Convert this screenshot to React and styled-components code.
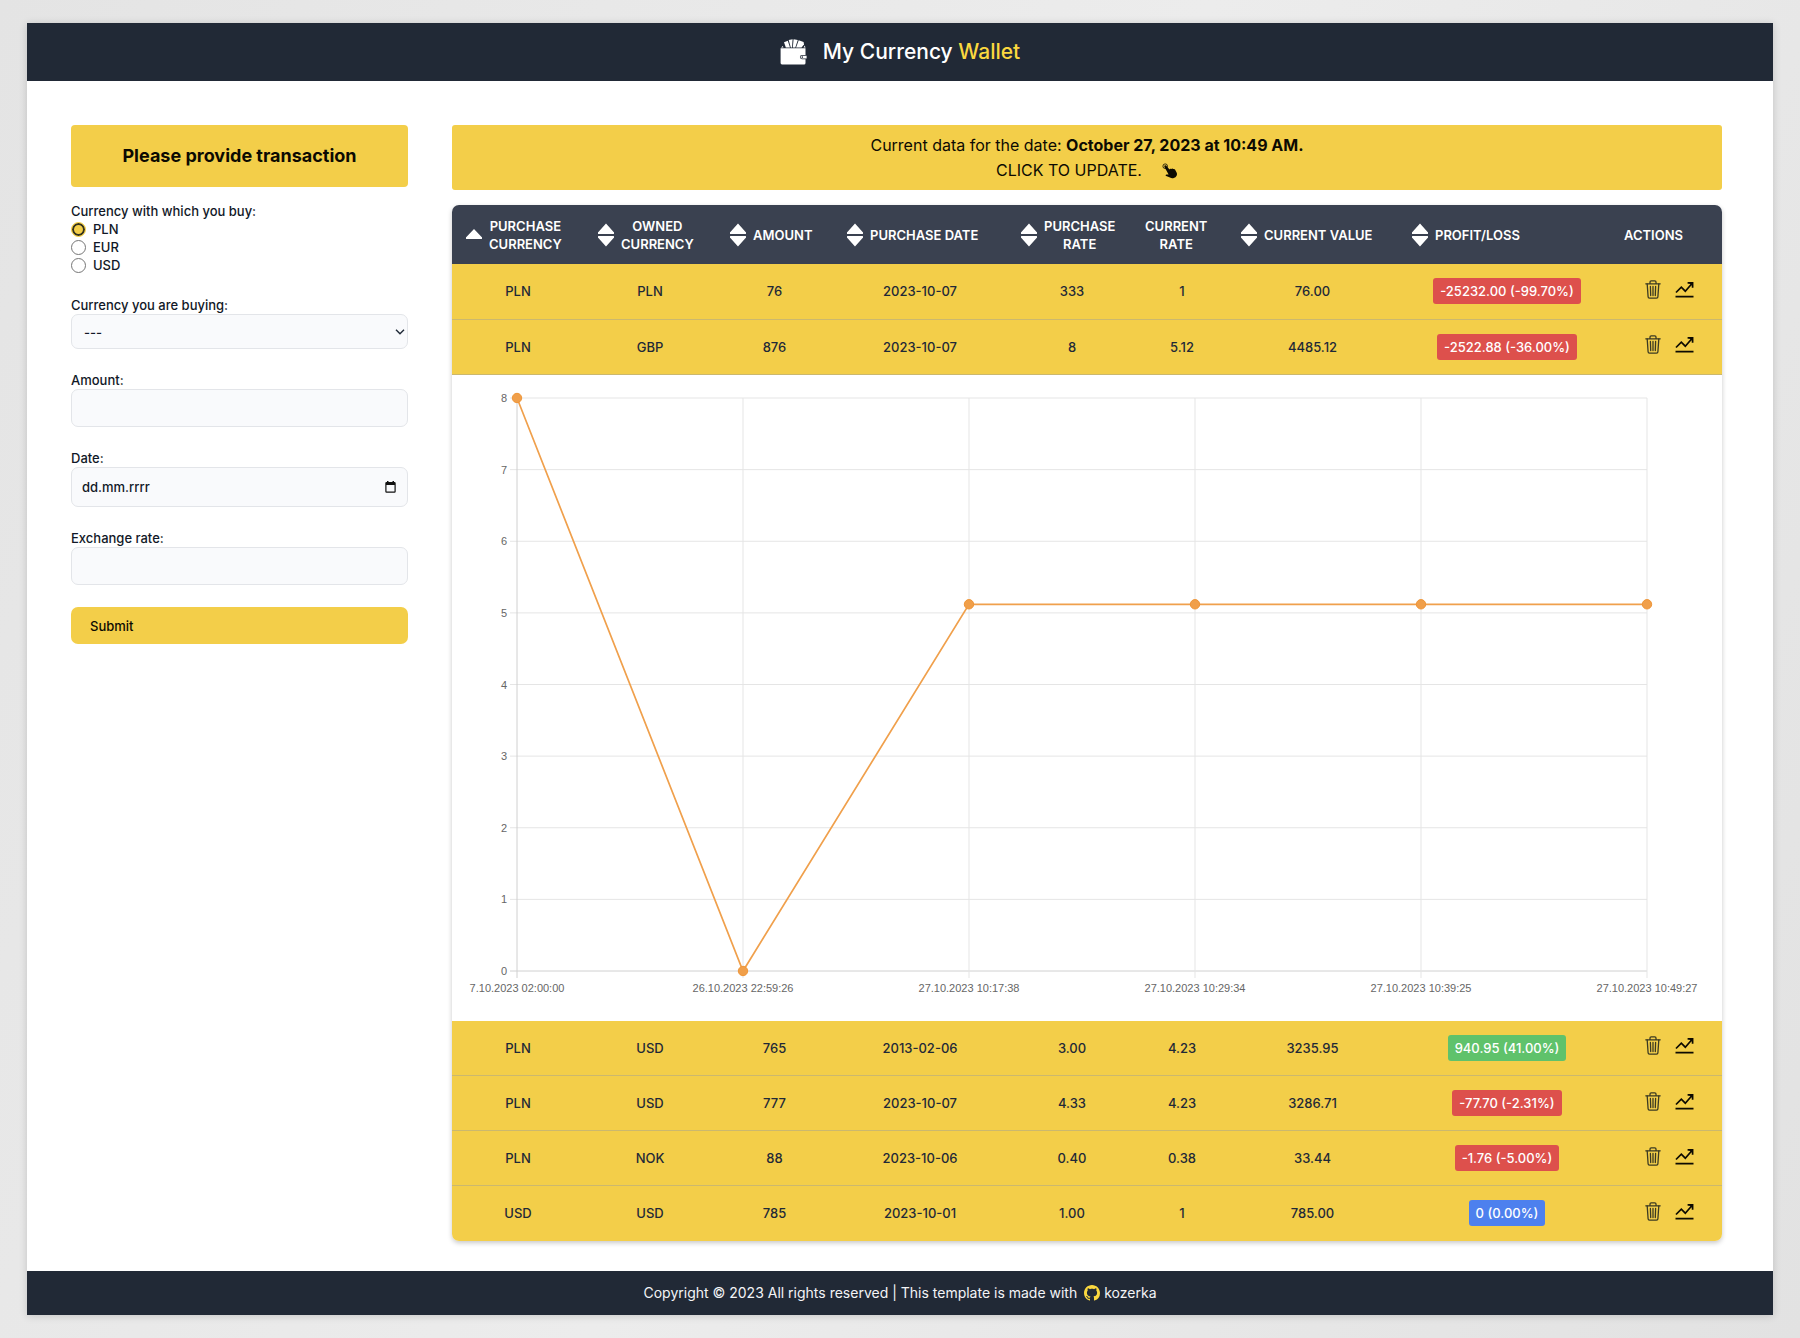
import React, { useState } from "react";
import styled, { createGlobalStyle, css } from "styled-components";

const yellow = "#f3ce49";
const navy = "#212936";

const GlobalStyle = createGlobalStyle`
  * { box-sizing: border-box; }
  body {
    margin: 0;
    min-height: 100vh;
    background: linear-gradient(115deg, #e4e4e4 0%, #ececec 50%, #e2e2e2 100%);
    font-family: Inter, "Liberation Sans", sans-serif;
    color: #111827;
  }
  button, input, select { font: inherit; color: inherit; }
`;

const Page = styled.div`
  padding: 23px 27px 24px;
`;

const Sheet = styled.div`
  background: #fff;
  box-shadow: 0 1px 8px rgba(0, 0, 0, 0.16);
`;

const Header = styled.header`
  display: flex;
  align-items: center;
  justify-content: center;
  gap: 16px;
  height: 58px;
  background: ${navy};
  color: #fff;
`;

const Brand = styled.h1`
  margin: 0;
  font-size: 21px;
  line-height: 28px;
  font-weight: 500;
`;

const Accent = styled.span`
  color: #fbd83f;
`;

const Content = styled.div`
  display: grid;
  grid-template-columns: minmax(0, 337fr) minmax(0, 1270fr);
  column-gap: 44px;
  align-items: start;
  padding: 44px 51px 30px 44px;
`;

const Form = styled.form`
  display: flex;
  flex-direction: column;
  gap: 22px;
  font-size: 13px;
  line-height: 18px;
  font-weight: 500;
`;

const FormTop = styled.div`
  display: flex;
  flex-direction: column;
  gap: 15px;
`;

const FormTitle = styled.h2`
  margin: 0;
  padding: 17px;
  border-radius: 4px;
  background: ${yellow};
  color: #0c0a02;
  font-size: 18px;
  line-height: 28px;
  font-weight: 700;
  text-align: center;
`;

const RadioGroup = styled.fieldset`
  margin: 0;
  padding: 0;
  border: 0;
`;

const Legend = styled.legend`
  padding: 0;
`;

const RadioLabel = styled.label`
  display: flex;
  align-items: center;
  gap: 7px;
`;

const Radio = styled.input`
  appearance: none;
  width: 15px;
  height: 15px;
  margin: 0;
  border: 1px solid #767676;
  border-radius: 50%;
  background: #fff;
  &:checked {
    border: 1px solid ${yellow};
    background: ${yellow};
    box-shadow: inset 0 0 0 2px #33321f;
  }
`;

const Field = styled.div`
  display: flex;
  flex-direction: column;
`;

const Control = styled.div`
  position: relative;
  display: flex;
`;

const box = css`
  width: 100%;
  height: ${(p) => p.$height}px;
  padding: 0 10px;
  border: 1px solid #e3e5e9;
  border-radius: 7px;
  background: #f9fafc;
  font-weight: 500;
`;

const Input = styled.input`
  ${box}
  &::placeholder { color: #111827; opacity: 1; }
`;

const Select = styled.select`
  ${box}
  appearance: none;
  padding: 0 12px;
`;

const ControlIcon = styled.svg`
  position: absolute;
  top: 50%;
  right: ${(p) => p.$right}px;
  transform: translateY(-50%);
  pointer-events: none;
`;

const Submit = styled.button`
  height: 37px;
  padding: 0 19px;
  border: 0;
  border-radius: 7px;
  background: ${yellow};
  color: #0c0a02;
  text-align: left;
`;

const Main = styled.main`
  display: flex;
  flex-direction: column;
  gap: 15px;
`;

const UpdateBanner = styled.button`
  padding: 8px 16px 7px;
  border: 0;
  border-radius: 3px;
  background: ${yellow};
  color: #0c0a02;
  font-size: 16px;
  line-height: 25px;
  text-align: center;
`;

const BannerAction = styled.span`
  display: flex;
  align-items: center;
  justify-content: center;
  gap: 20px;
`;

const TableCard = styled.div`
  overflow: hidden;
  border-radius: 7px;
  box-shadow: 0 2px 5px rgba(0, 0, 0, 0.22);
`;

const Table = styled.table`
  width: 100%;
  table-layout: fixed;
  border-collapse: collapse;
  font-size: 13px;
  line-height: 18px;
  font-weight: 500;
`;

const Column = styled.col`
  width: ${(p) => p.$width}px;
`;

const HeadCell = styled.th`
  height: 59px;
  padding: 0;
  background: #3a4150;
  color: #fff;
  font-weight: 600;
  text-transform: uppercase;
`;

const HeadContent = styled.div`
  display: flex;
  align-items: center;
  padding-left: 8px;
`;

const SortButton = styled.button`
  display: flex;
  align-items: center;
  gap: 7px;
  padding: 0 0 0 14px;
  border: 0;
  background: none;
  text-transform: inherit;
`;

const HeadText = styled.span`
  white-space: pre-line;
`;

const Row = styled.tr`
  height: 55px;
  background: ${yellow};
  border-bottom: 1px solid #cbb86e;
  &:last-child { border-bottom: 0; }
`;

const Cell = styled.td`
  padding: 0;
  text-align: center;
  color: #1f2937;
`;

const badgeColors = { loss: "#dd504c", gain: "#5fc26b", even: "#4d80ee" };

const Badge = styled.span`
  display: inline-block;
  padding: 4px 7px;
  border-radius: 3px;
  background: ${(p) => badgeColors[p.$tone]};
  color: #fff;
`;

const Actions = styled.div`
  display: flex;
  align-items: center;
  justify-content: center;
  gap: 14px;
  padding-bottom: 4px;
`;

const IconButton = styled.button`
  display: flex;
  padding: 0;
  border: 0;
  background: none;
`;

const ChartCell = styled.td`
  padding: 0;
  background: #fff;
`;

const ChartSvg = styled.svg`
  display: block;
  width: 100%;
  height: auto;
  font-family: "Liberation Sans", Arial, sans-serif;
  font-size: 11px;
`;

const Footer = styled.footer`
  display: flex;
  align-items: center;
  justify-content: center;
  gap: 7px;
  height: 44px;
  background: ${navy};
  color: #f3f4f6;
  font-size: 14px;
  line-height: 22px;
`;

const AuthorLink = styled.a`
  display: flex;
  align-items: center;
  gap: 4px;
  color: inherit;
  text-decoration: none;
`;

const WalletIcon = () => (
  <svg width="27" height="28" viewBox="0 0 27 28" fill="#fff" aria-hidden="true">
    <path d="M4 4.200 7.800 2.800 10 9.400H5.800z" />
    <path d="M8.700 1.900 12.600 1.300 12 9.400h-1.200z" />
    <path d="M13.600 1.200 17.800 1.900 15.300 9.400h-2.500z" />
    <path d="M18.700 2.200 23.600 3.900 24 6.500 21.500 9.400h-5.400z" />
    <path d="M2.800 8 1 9.600h2.500zM24.700 7.500 25.600 9.600h-2z" />
    <path d="M2 10.200h23.500V17H22a2.100 2.100 0 0 0 0 4.200h3.500V25a1.500 1.500 0 0 1-1.500 1.500H2A1.500 1.500 0 0 1 .6 25V10.200z" />
    <path d="M22 17.700h4.600v2.800H22a1.400 1.400 0 0 1 0-2.800z" />
    <circle cx="22.300" cy="19.100" r=".8" fill={navy} />
  </svg>
);

const PointerIcon = () => (
  <svg width="16" height="16" viewBox="0 0 16 16" aria-hidden="true">
    <circle cx="3.200" cy="3.200" r="2.300" fill="none" stroke="#0c0a02" strokeWidth=".8" />
    <path
      fill="#0c0a02"
      d="M2.700 2.600c.6-.5 1.300-.3 1.800.3l3 3.600c.2-.9 1.300-1.100 1.900-.4.4-.7 1.400-.7 1.900 0 .6-.4 1.400-.2 1.700.4l1.600 3c.7 1.400.5 3-.7 4.200-1.600 1.600-4.200 1.900-5.900.9l-3.800-1.500c-1-.4-.6-1.800.5-1.700l1.900.2-4-7.300c-.3-.6-.4-1.300.1-1.700z"
    />
  </svg>
);

const SortIcon = ({ single }) => (
  <svg width="16" height="24" viewBox="0 0 16 24" fill="currentColor" aria-hidden="true">
    {single ? (
      <path d="M8 6 15.600 14a1 1 0 0 1-.6 2H1a1 1 0 0 1-.6-2z" />
    ) : (
      <>
        <path d="M8 .5 15.600 9a1 1 0 0 1-.6 2H1a1 1 0 0 1-.6-2z" />
        <path d="M8 23.500 15.600 15a1 1 0 0 0-.6-2H1a1 1 0 0 0-.6 2z" />
      </>
    )}
  </svg>
);

const TrashIcon = () => (
  <svg width="16" height="19" viewBox="0 0 16 19" fill="none" stroke="#3b3a22" strokeWidth="1.300" strokeLinecap="round" aria-hidden="true">
    <path d="M.8 3.800h14.400M5 3.500V2.100C5 1.300 5.400.8 6.200.8h3.600c.8 0 1.200.5 1.200 1.300v1.400" />
    <path d="m2.200 4 .9 12.700c0 .9.500 1.400 1.400 1.400h7c.9 0 1.400-.5 1.400-1.400L13.800 4" />
    <path d="m5.400 6.500.3 9M8 6.500v9M10.600 6.500l-.3 9" />
  </svg>
);

const TrendIcon = () => (
  <svg width="19" height="17" viewBox="0 0 19 17" fill="none" stroke="#0c0a02" strokeWidth="1.700" aria-hidden="true">
    <path d="m1 11.500 5.300-5.300 4 4L17 2.500" />
    <path d="M12.600 1.800h5v5M.5 15.600h18" />
    <path d="m14.500 2 3 3V2z" fill="#0c0a02" strokeWidth=".5" />
  </svg>
);

const GithubIcon = () => (
  <svg width="16" height="16" viewBox="0 0 16 16" fill="#fbd83f" aria-hidden="true">
    <path d="M8 0C3.580 0 0 3.580 0 8c0 3.540 2.290 6.530 5.470 7.590.4.070.55-.17.55-.38 0-.19-.01-.82-.01-1.490-2.010.37-2.530-.49-2.690-.94-.09-.23-.48-.94-.82-1.130-.28-.15-.68-.52-.01-.53.63-.01 1.080.58 1.230.82.72 1.210 1.870.87 2.330.66.07-.52.28-.87.51-1.070-1.780-.2-3.640-.89-3.640-3.950 0-.87.31-1.590.82-2.150-.08-.2-.36-1.020.08-2.120 0 0 .67-.21 2.200.82.64-.18 1.320-.27 2-.27s1.360.09 2 .27c1.530-1.040 2.200-.82 2.200-.82.44 1.100.16 1.920.08 2.120.51.56.82 1.270.82 2.150 0 3.070-1.870 3.750-3.650 3.950.29.25.54.73.54 1.480 0 1.070-.01 1.930-.01 2.200 0 .21.15.46.55.38A8.010 8.010 0 0 0 16 8c0-4.420-3.580-8-8-8z" />
  </svg>
);

const columns = [
  { title: "Purchase\ncurrency", width: 132, sort: "single" },
  { title: "Owned\ncurrency", width: 132, sort: "both" },
  { title: "Amount", width: 117, sort: "both" },
  { title: "Purchase date", width: 174, sort: "both" },
  { title: "Purchase\nrate", width: 130, sort: "both" },
  { title: "Current\nrate", width: 90 },
  { title: "Current value", width: 171, sort: "both" },
  { title: "Profit/loss", width: 218, sort: "both" },
  { title: "Actions", width: 106 },
];

const rows = [
  { cells: ["PLN", "PLN", "76", "2023-10-07", "333", "1", "76.00"], result: "-25232.00 (-99.70%)", tone: "loss" },
  { cells: ["PLN", "GBP", "876", "2023-10-07", "8", "5.12", "4485.12"], result: "-2522.88 (-36.00%)", tone: "loss", chart: true },
  { cells: ["PLN", "USD", "765", "2013-02-06", "3.00", "4.23", "3235.95"], result: "940.95 (41.00%)", tone: "gain" },
  { cells: ["PLN", "USD", "777", "2023-10-07", "4.33", "4.23", "3286.71"], result: "-77.70 (-2.31%)", tone: "loss" },
  { cells: ["PLN", "NOK", "88", "2023-10-06", "0.40", "0.38", "33.44"], result: "-1.76 (-5.00%)", tone: "loss" },
  { cells: ["USD", "USD", "785", "2023-10-01", "1.00", "1", "785.00"], result: "0 (0.00%)", tone: "even" },
];

const rates = [
  ["7.10.2023 02:00:00", 8],
  ["26.10.2023 22:59:26", 0],
  ["27.10.2023 10:17:38", 5.12],
  ["27.10.2023 10:29:34", 5.12],
  ["27.10.2023 10:39:25", 5.12],
  ["27.10.2023 10:49:27", 5.12],
];

const plot = { left: 65, right: 1195, top: 23, bottom: 596 };
const xAt = (i) => plot.left + ((plot.right - plot.left) * i) / (rates.length - 1);
const yAt = (v) => plot.bottom - ((plot.bottom - plot.top) * v) / 8;

const RateChart = () => (
  <ChartSvg viewBox="0 0 1270 646" role="img" aria-label="Exchange rate history">
    <g stroke="#e5e5e5">
      {[0, 1, 2, 3, 4, 5, 6, 7, 8].map((v) => (
        <line key={v} x1={plot.left - 7} x2={plot.right} y1={yAt(v)} y2={yAt(v)} stroke={v === 0 ? "#d0d0d0" : undefined} />
      ))}
      {rates.map(([label], i) => (
        <line key={label} x1={xAt(i)} x2={xAt(i)} y1={plot.top} y2={plot.bottom + 7} stroke={i === 0 ? "#d0d0d0" : undefined} />
      ))}
    </g>
    <g fill="#666">
      {[0, 1, 2, 3, 4, 5, 6, 7, 8].map((v) => (
        <text key={v} x={plot.left - 10} y={yAt(v) + 4} textAnchor="end">{v}</text>
      ))}
      {rates.map(([label], i) => (
        <text key={label} x={xAt(i)} y={plot.bottom + 21} textAnchor="middle">{label}</text>
      ))}
    </g>
    <polyline points={rates.map(([, v], i) => `${xAt(i)},${yAt(v)}`).join(" ")} fill="none" stroke="#f0a04c" strokeWidth="1.700" />
    {rates.map(([label, v], i) => (
      <circle key={label} cx={xAt(i)} cy={yAt(v)} r="4.700" fill="#f09f4a" stroke="#ef9537" strokeWidth="1" />
    ))}
  </ChartSvg>
);

const TransactionForm = () => {
  const [currency, setCurrency] = useState("PLN");
  return (
    <Form onSubmit={(e) => e.preventDefault()}>
      <FormTop>
        <FormTitle>Please provide transaction</FormTitle>
        <RadioGroup>
          <Legend>Currency with which you buy:</Legend>
          {["PLN", "EUR", "USD"].map((code) => (
            <RadioLabel key={code}>
              <Radio type="radio" name="currency" value={code} checked={currency === code} onChange={() => setCurrency(code)} />
              {code}
            </RadioLabel>
          ))}
        </RadioGroup>
      </FormTop>
      <Field>
        <label htmlFor="buying">Currency you are buying:</label>
        <Control>
          <Select id="buying" $height={35}>
            <option>---</option>
            <option>EUR</option>
            <option>GBP</option>
            <option>USD</option>
          </Select>
          <ControlIcon $right={3} width="10" height="6" viewBox="0 0 10 6" fill="none" stroke="#1f2937" strokeWidth="1.400" aria-hidden="true">
            <path d="m1 .8 4 4 4-4" />
          </ControlIcon>
        </Control>
      </Field>
      <Field>
        <label htmlFor="amount">Amount:</label>
        <Input id="amount" $height={38} />
      </Field>
      <Field>
        <label htmlFor="date">Date:</label>
        <Control>
          <Input id="date" placeholder="dd.mm.rrrr" $height={40} />
          <ControlIcon $right={12} width="11" height="12" viewBox="0 0 11 12" aria-hidden="true">
            <path fill="#111" d="M1.500 1H2V0h1.500v1h4V0H9v1h.5A1.200 1.200 0 0 1 10.700 2.200v8.400a1.200 1.200 0 0 1-1.200 1.200h-8A1.200 1.200 0 0 1 .3 10.600V2.200A1.200 1.200 0 0 1 1.500 1zm0 3v6.600h8V4z" />
          </ControlIcon>
        </Control>
      </Field>
      <Field>
        <label htmlFor="rate">Exchange rate:</label>
        <Input id="rate" $height={38} />
      </Field>
      <Submit type="submit">Submit</Submit>
    </Form>
  );
};

const TransactionTable = () => (
  <TableCard>
    <Table>
      <colgroup>
        {columns.map((c) => <Column key={c.title} $width={c.width} />)}
      </colgroup>
      <thead>
        <tr>
          {columns.map((c) => (
            <HeadCell key={c.title} scope="col">
              {c.sort ? (
                <SortButton type="button">
                  <SortIcon single={c.sort === "single"} />
                  <HeadText>{c.title}</HeadText>
                </SortButton>
              ) : (
                <HeadContent><HeadText>{c.title}</HeadText></HeadContent>
              )}
            </HeadCell>
          ))}
        </tr>
      </thead>
      <tbody>
        {rows.map((row) => (
          <React.Fragment key={row.result}>
            <Row>
              {row.cells.map((cell, i) => <Cell key={i}>{cell}</Cell>)}
              <Cell><Badge $tone={row.tone}>{row.result}</Badge></Cell>
              <Cell>
                <Actions>
                  <IconButton type="button" aria-label="Delete"><TrashIcon /></IconButton>
                  <IconButton type="button" aria-label="Show chart"><TrendIcon /></IconButton>
                </Actions>
              </Cell>
            </Row>
            {row.chart && (
              <tr>
                <ChartCell colSpan={columns.length}><RateChart /></ChartCell>
              </tr>
            )}
          </React.Fragment>
        ))}
      </tbody>
    </Table>
  </TableCard>
);

export default function App() {
  return (
    <>
      <GlobalStyle />
      <Page>
        <Sheet>
          <Header>
            <WalletIcon />
            <Brand>My Currency <Accent>Wallet</Accent></Brand>
          </Header>
          <Content>
            <TransactionForm />
            <Main>
              <UpdateBanner type="button">
                Current data for the date: <strong>October 27, 2023 at 10:49 AM.</strong>
                <BannerAction>CLICK TO UPDATE. <PointerIcon /></BannerAction>
              </UpdateBanner>
              <TransactionTable />
            </Main>
          </Content>
          <Footer>
            <span>Copyright © 2023 All rights reserved | This template is made with</span>
            <AuthorLink href="#kozerka"><GithubIcon />kozerka</AuthorLink>
          </Footer>
        </Sheet>
      </Page>
    </>
  );
}
